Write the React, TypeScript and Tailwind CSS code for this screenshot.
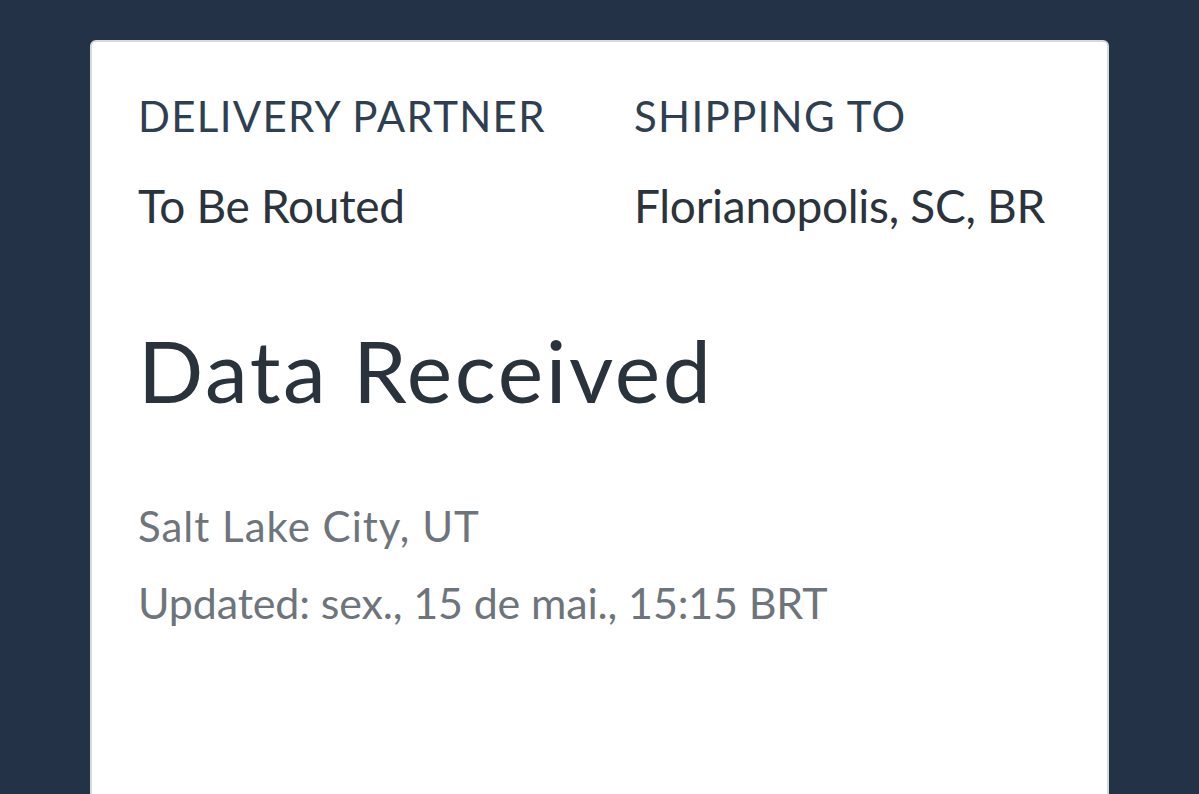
import React from 'react';

const font = { fontFamily: 'Lato, "Open Sans", sans-serif' };

export default function App() {
  return (
    <div className="min-h-screen bg-[#233246] px-[90px] pt-10 overflow-hidden" style={font}>
      <div className="h-[800px] rounded-md border-2 border-[#d7dadd] bg-white pl-[46px] pr-12 pt-[53px]">
        <div className="grid grid-cols-[496px_1fr]">
          <div>
            <div className="text-[42px] leading-[42px] tracking-[1.3px] text-[#2f3f52]">DELIVERY PARTNER</div>
            <div className="mt-[46px] text-[46px] leading-[46px] tracking-[-0.3px] text-[#2b333d]">To Be Routed</div>
          </div>
          <div>
            <div className="text-[42px] leading-[42px] tracking-[1.3px] text-[#2f3f52]">SHIPPING TO</div>
            <div className="mt-[46px] text-[46px] leading-[46px] tracking-[-0.3px] text-[#2b333d]">Florianopolis, SC, BR</div>
          </div>
        </div>
        <h1 className="mt-[98px] text-[86px] leading-[86px] tracking-[2.6px] text-[#2a323c]">Data Received</h1>
        <p className="mt-[92px] text-[42px] leading-[42px] tracking-[1px] text-[#6e747b]">Salt Lake City, UT</p>
        <p className="mt-[34px] text-[43px] leading-[43px] tracking-[-0.15px] text-[#6e747b]">Updated: sex., 15 de mai., 15:15 BRT</p>
      </div>
    </div>
  );
}
